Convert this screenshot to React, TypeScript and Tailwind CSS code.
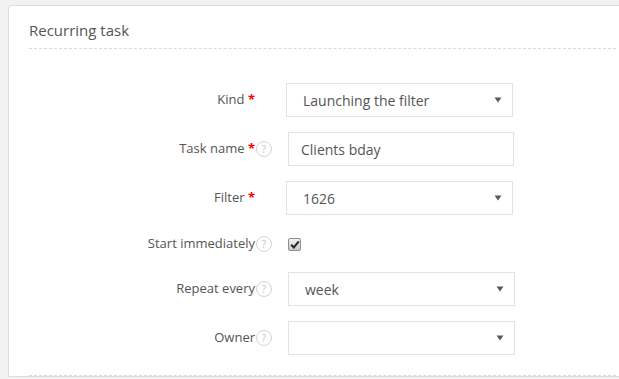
import React from 'react';

type Row = {
  label: string;
  required?: boolean;
  help?: boolean;
  kind: 'select' | 'input' | 'checkbox';
  value?: string;
  offset: string;
  width: string;
};

const rows: Row[] = [
  { label: 'Kind', required: true, kind: 'select', value: 'Launching the filter', offset: 'ml-[13px]', width: 'w-[227px]' },
  { label: 'Task name', required: true, help: true, kind: 'input', value: 'Clients bday', offset: 'ml-[15px]', width: 'w-[226px]' },
  { label: 'Filter', required: true, kind: 'select', value: '1626', offset: 'ml-[13px]', width: 'w-[227px]' },
  { label: 'Start immediately', help: true, kind: 'checkbox', offset: 'ml-[15px]', width: 'w-[13px]' },
  { label: 'Repeat every', help: true, kind: 'select', value: 'week', offset: 'ml-[15px]', width: 'w-[227px]' },
  { label: 'Owner', help: true, kind: 'select', value: '', offset: 'ml-[15px]', width: 'w-[227px]' },
];

function HelpIcon() {
  return (
    <span className="ml-[1px] inline-flex h-[16px] w-[16px] items-center justify-center rounded-full border border-[#d4d4d4] text-[10px] leading-none text-[#c4c4c4]">
      ?
    </span>
  );
}

function Caret() {
  return (
    <svg width="8" height="6" viewBox="0 0 8 6" className="shrink-0">
      <path d="M0.5 0.5 H7.5 L4 5.5 Z" fill="#5a5a5a" />
    </svg>
  );
}

function Field({ row }: { row: Row }) {
  if (row.kind === 'checkbox') {
    return (
      <span className={`${row.offset} mt-[2px] flex h-[13px] w-[13px] items-center justify-center rounded-[2px] border border-[#8e8e8e] bg-gradient-to-b from-[#f2f2f2] to-[#c9c9c9]`}>
        <svg width="10" height="9" viewBox="0 0 10 9">
          <path d="M1.2 4.8 L3.8 7.4 L8.8 1.4" stroke="#262626" strokeWidth="2" fill="none" />
        </svg>
      </span>
    );
  }
  if (row.kind === 'input') {
    return (
      <div className={`${row.offset} ${row.width} flex h-[34px] items-center border border-[#e2e2e2] bg-white pl-[12px] text-[14px] text-[#555]`}>
        {row.value}
      </div>
    );
  }
  return (
    <div className={`${row.offset} ${row.width} flex h-[34px] items-center justify-between border border-[#e2e2e2] bg-white pl-[16px] pr-[10px] text-[14px] text-[#555]`}>
      <span>{row.value}</span>
      <Caret />
    </div>
  );
}

export default function App() {
  return (
    <div
      className="h-[379px] w-[619px] overflow-hidden bg-[#f2f2f2] pl-[8px] pt-[5px]"
      style={{ fontFamily: '"Open Sans", "Liberation Sans", sans-serif' }}
    >
      <div className="w-[629px] rounded-tl-[3px] border border-[#dcdcdc] bg-white px-5 pt-[14px]">
        {/* Header */}
        <div className="border-b border-dashed border-[#dadada] pb-[8px] text-[15px] leading-[20px] text-[#555]">
          Recurring task
        </div>

        {/* Form */}
        <div className="flex flex-col gap-[15px] pt-[34px] pb-[20px]">
          {rows.map((row) => (
            <div key={row.label} className={`flex items-center ${row.kind === 'checkbox' ? 'h-[27px]' : 'h-[34px]'}`}>
              <div className="flex w-[244px] items-center justify-end text-[13px] text-[#555]">
                <span>
                  {row.label}
                  {row.required && <span className="font-bold text-[#f00]"> *</span>}
                </span>
                <span className="flex w-[18px] justify-start">{row.help && <HelpIcon />}</span>
              </div>
              <Field row={row} />
            </div>
          ))}
        </div>

        <div className="border-b border-dashed border-[#dadada]" />
      </div>
    </div>
  );
}
